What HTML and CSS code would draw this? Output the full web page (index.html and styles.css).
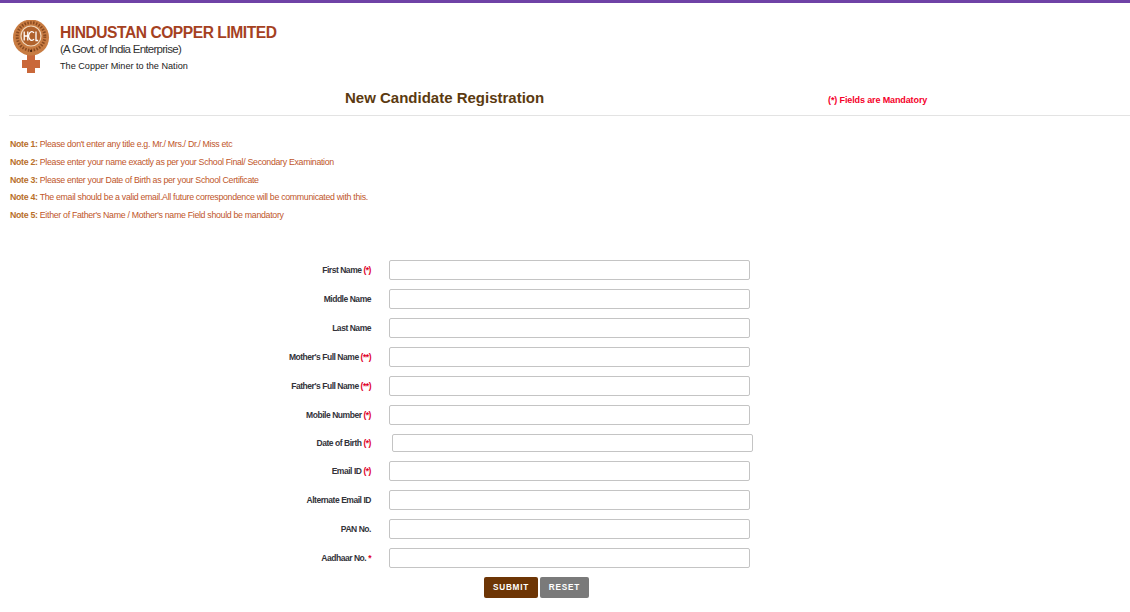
FILE: index.html
```html
<!DOCTYPE html>
<html lang="en">
<head>
<meta charset="utf-8">
<title>New Candidate Registration</title>
<link rel="stylesheet" href="styles.css">
</head>
<body>
<header class="brand">
  <svg class="logo" viewBox="0 0 38 54" width="38" height="54" aria-hidden="true">
    <rect x="15" y="33" width="8" height="20" fill="#c9683a"/>
    <rect x="10" y="40" width="18" height="8" fill="#c9683a"/>
    <circle cx="19" cy="17.5" r="18" fill="#c87c42"/>
    <circle cx="19" cy="16.5" r="13.8" fill="none" stroke="#8a4a20" stroke-width="3" stroke-dasharray="1.5 1.4"/>
    <circle cx="19" cy="16" r="10" fill="#b0622c" stroke="#f0d6ba" stroke-width="1.2"/>
    <path d="M12.2 11.5v9M15.8 11.5v9M12.2 16h3.6" stroke="#fff" stroke-width="1.3" fill="none"/>
    <path d="M22 13a3 4.4 0 1 0 0 6" stroke="#fff" stroke-width="1.3" fill="none"/>
    <path d="M24 11.5v9h2.2" stroke="#fff" stroke-width="1.3" fill="none"/>
    <circle cx="19" cy="31" r="0.9" fill="#2f1606"/>
  </svg>
  <div class="brand-text">
    <div class="brand-name">HINDUSTAN COPPER LIMITED</div>
    <div class="brand-sub">(A Govt. of India Enterprise)</div>
    <div class="brand-tag">The Copper Miner to the Nation</div>
  </div>
</header>

<div class="title-row">
  <h1 class="page-title">New Candidate Registration</h1>
  <p class="mandatory">(*) Fields are Mandatory</p>
</div>

<section class="notes">
  <p class="note"><b>Note 1:</b> Please don't enter any title e.g. Mr./ Mrs./ Dr./ Miss etc</p>
  <p class="note"><b>Note 2:</b> Please enter your name exactly as per your School Final/ Secondary Examination</p>
  <p class="note"><b>Note 3:</b> Please enter your Date of Birth as per your School Certificate</p>
  <p class="note"><b>Note 4:</b> The email should be a valid email.All future correspondence will be communicated with this.</p>
  <p class="note"><b>Note 5:</b> Either of Father's Name / Mother's name Field should be mandatory</p>
</section>

<form class="form">
  <div class="row"><label class="label">First Name <span class="req">(*)</span></label><input class="field" type="text"></div>
  <div class="row"><label class="label">Middle Name</label><input class="field" type="text"></div>
  <div class="row"><label class="label">Last Name</label><input class="field" type="text"></div>
  <div class="row"><label class="label">Mother's Full Name <span class="req">(**)</span></label><input class="field" type="text"></div>
  <div class="row"><label class="label">Father's Full Name <span class="req">(**)</span></label><input class="field" type="text"></div>
  <div class="row"><label class="label">Mobile Number <span class="req">(*)</span></label><input class="field" type="text"></div>
  <div class="row row-date"><label class="label">Date of Birth <span class="req">(*)</span></label><input class="field field-date" type="text"></div>
  <div class="row"><label class="label">Email ID <span class="req">(*)</span></label><input class="field" type="text"></div>
  <div class="row"><label class="label">Alternate Email ID</label><input class="field" type="text"></div>
  <div class="row"><label class="label">PAN No.</label><input class="field" type="text"></div>
  <div class="row"><label class="label">Aadhaar No. <span class="req">*</span></label><input class="field" type="text"></div>
  <div class="actions">
    <button class="btn btn-submit" type="button">SUBMIT</button>
    <button class="btn btn-reset" type="button">RESET</button>
  </div>
</form>
</body>
</html>
```
FILE: styles.css
```css
* { box-sizing: border-box; }
html, body { margin: 0; padding: 0; }
body {
  background: #fff;
  border-top: 3px solid #6f42a6;
  font-family: "Liberation Sans", Arial, sans-serif;
  height: 612px;
  overflow: hidden;
}
.brand {
  display: flex;
  align-items: flex-start;
  gap: 10px;
  padding: 17px 0 0 12px;
  height: 84px;
}
.logo { flex: none; }
.brand-text { padding-top: 4px; }
.brand-name {
  font-size: 15.6px;
  letter-spacing: -0.46px;
  font-weight: bold;
  line-height: 18px;
  color: #a5411f;
}
.brand-sub {
  font-size: 11.5px;
  line-height: 14px;
  margin-top: 0;
  color: #333;
  letter-spacing: -0.72px;
}
.brand-tag {
  font-size: 9.14px;
  line-height: 12px;
  margin-top: 4px;
  color: #222;
}
.title-row {
  display: flex;
  align-items: flex-start;
  margin-left: 9px;
  height: 29px;
  border-bottom: 1px solid #e3e3e3;
}
.page-title {
  margin: 0 0 0 336px;
  width: 485px;
  font-size: 15px;
  font-weight: bold;
  line-height: 22px;
  color: #5b3a10;
}
.mandatory {
  margin: 7px 0 0 -2px;
  font-size: 9px;
  letter-spacing: -0.12px;
  font-weight: bold;
  line-height: 12px;
  color: #f5002a;
}
.notes {
  padding: 20px 0 0 10px;
  height: 144px;
}
.note {
  margin: 0;
  font-size: 8.8px;
  letter-spacing: -0.31px;
  line-height: 17.75px;
  color: #c0562a;
}
.note b { color: #b8702a; }
.form { display: flex; flex-direction: column; }
.row {
  display: flex;
  align-items: center;
  height: 20px;
  margin-bottom: 9px;
}
.row-date { height: 18px; }
.label {
  width: 371px;
  margin-right: 18px;
  padding-bottom: 1px;
  text-align: right;
  font-size: 8.5px;
  letter-spacing: -0.46px;
  font-weight: bold;
  color: #33333a;
}
.req { color: #e0002a; }
.field {
  width: 361px;
  height: 20px;
  padding: 0 6px;
  background: #fff;
  border: 1px solid #c4c4c4;
  border-radius: 2px;
  outline: none;
}
.field-date { height: 18px; margin-left: 3px; }
.actions {
  display: flex;
  gap: 2px;
  padding-left: 484px;
}
.btn {
  height: 21px;
  padding: 0 0 1px;
  border: none;
  border-radius: 2px;
  color: #fff;
  font-family: "Liberation Sans", Arial, sans-serif;
  font-size: 8.2px;
  font-weight: bold;
  letter-spacing: 0.8px;
}
.btn-submit { width: 54px; background: #6d3505; }
.btn-reset { width: 49px; background: #7a7a7a; }
```
